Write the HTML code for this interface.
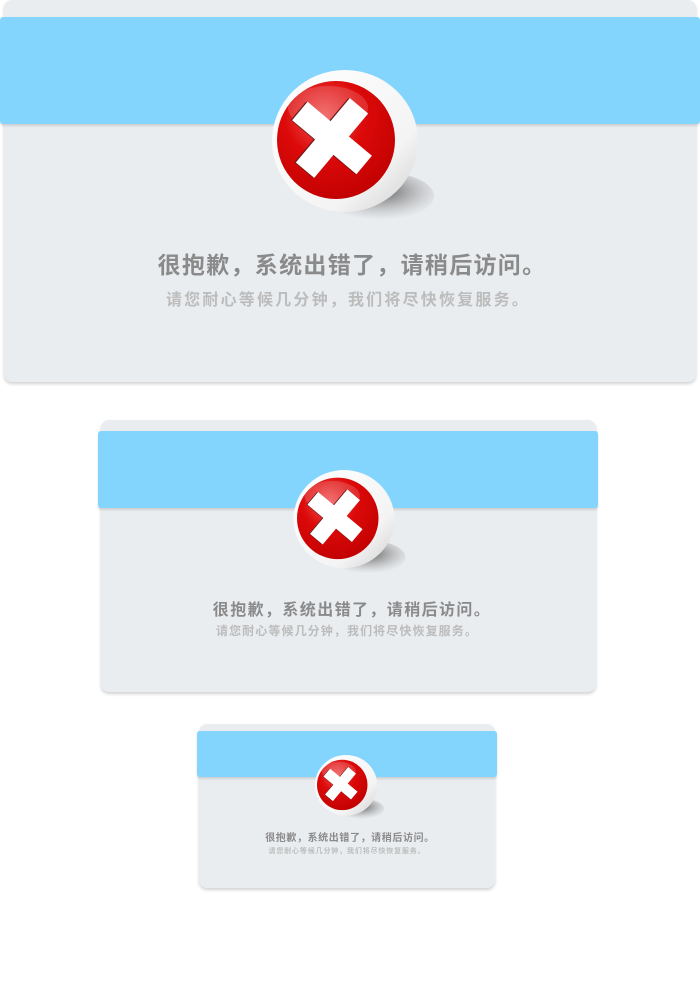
<!DOCTYPE html>
<html><head><meta charset="utf-8"><style>
html,body{margin:0;padding:0;background:#fff;width:700px;height:1000px;overflow:hidden;position:relative;font-family:"Liberation Sans","Noto Sans CJK SC",sans-serif;}
.card{position:absolute;background:#eaedf0;border-radius:8px;box-shadow:0 2px 3px rgba(0,0,0,0.18);}
.band{position:absolute;background:#83d5fd;box-shadow:0 2px 2px rgba(0,0,0,0.12);border-radius:3px;}
.icon{position:absolute;}
.t1,.t2{position:absolute;left:0;width:700px;text-align:center;font-weight:bold;white-space:nowrap;}
.t1{color:#8a8a8a}.t2{color:#bcbcbc}
</style></head><body>
<svg width="0" height="0" style="position:absolute">
<defs>
<radialGradient id="red" cx="0.4" cy="0.3" r="0.75"><stop offset="0" stop-color="#f05a5a"/><stop offset="0.45" stop-color="#dd0a0a"/><stop offset="1" stop-color="#c00000"/></radialGradient>
<radialGradient id="sh" cx="0.5" cy="0.4" r="0.6"><stop offset="0" stop-color="#444" stop-opacity="0.85"/><stop offset="1" stop-color="#999" stop-opacity="0"/></radialGradient>
<linearGradient id="wd" x1="0" y1="0" x2="1" y2="1"><stop offset="0" stop-color="#fff"/><stop offset="0.7" stop-color="#f4f4f4"/><stop offset="1" stop-color="#cfcfcf"/></linearGradient>
<g id="ic">
<ellipse cx="110" cy="126" rx="54" ry="24" fill="url(#sh)"/>
<ellipse cx="75" cy="71" rx="73" ry="71" fill="url(#wd)"/>
<circle cx="66" cy="70" r="59" fill="url(#red)"/>
<ellipse cx="58" cy="38" rx="40" ry="22" fill="#fff" opacity="0.15"/>
<g transform="translate(62,68) rotate(40)">
<polygon points="-12,-42 12,-42 12,-12 42,-12 42,12 12,12 12,42 -12,42 -12,12 -42,12 -42,-12 -12,-12" fill="#6a1a1a" transform="translate(-1.2,0.8)"/>
<polygon points="-12,-42 12,-42 12,-12 42,-12 42,12 12,12 12,42 -12,42 -12,12 -42,12 -42,-12 -12,-12" fill="#fff"/>
</g>
</g>
</defs></svg>

<div class="card" style="left:4px;top:0;width:692px;height:382px"></div>
<div class="band" style="left:0;top:17px;width:700px;height:107px"></div>
<svg class="icon" style="left:270px;top:70px" width="166" height="152" viewBox="0 0 166 152"><use href="#ic"/></svg>
<div class="t1" style="top:246px;font-size:23px;letter-spacing:1.3px;left:2px">很抱歉，系统出错了，请稍后访问。</div>
<div class="t2" style="top:286px;font-size:16px;letter-spacing:2.2px;left:-2px">请您耐心等候几分钟，我们将尽快恢复服务。</div>

<div class="card" style="left:101px;top:420px;width:495px;height:272px"></div>
<div class="band" style="left:98px;top:431px;width:500px;height:77px"></div>
<svg class="icon" style="left:292px;top:470px" width="115" height="105" viewBox="0 0 166 152"><use href="#ic"/></svg>
<div class="t1" style="top:596px;font-size:16px;letter-spacing:1.4px;left:2px">很抱歉，系统出错了，请稍后访问。</div>
<div class="t2" style="top:622px;font-size:12px;letter-spacing:1.1px;left:-3px">请您耐心等候几分钟，我们将尽快恢复服务。</div>

<div class="card" style="left:199px;top:724px;width:296px;height:164px"></div>
<div class="band" style="left:197px;top:731px;width:300px;height:46px"></div>
<svg class="icon" style="left:314px;top:755px" width="71" height="65" viewBox="0 0 166 152"><use href="#ic"/></svg>
<div class="t1" style="top:829px;font-size:10px;letter-spacing:0.6px;left:0px">很抱歉，系统出错了，请稍后访问。</div>
<div class="t2" style="top:846px;font-size:7px;letter-spacing:0.85px;left:-3px">请您耐心等候几分钟，我们将尽快恢复服务。</div>
</body></html>
